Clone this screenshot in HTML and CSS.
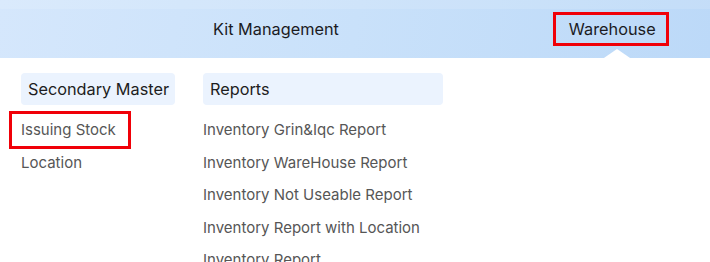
FILE: index.html
```html
<!DOCTYPE html>
<html>
<head>
<meta charset="utf-8">
<link rel="stylesheet" href="styles.css">
</head>
<body>
<header class="topbar">
  <nav class="nav">
    <span class="nav-item">Kit Management</span>
    <span class="nav-item nav-active">Warehouse</span>
  </nav>
</header>
<main class="menu">
  <section class="col col-master">
    <div class="col-head">Secondary Master</div>
    <ul class="col-list">
      <li class="col-item marked">Issuing Stock</li>
      <li class="col-item">Location</li>
    </ul>
  </section>
  <section class="col col-reports">
    <div class="col-head">Reports</div>
    <ul class="col-list">
      <li class="col-item">Inventory Grin&amp;Iqc Report</li>
      <li class="col-item">Inventory WareHouse Report</li>
      <li class="col-item">Inventory Not Useable Report</li>
      <li class="col-item">Inventory Report with Location</li>
      <li class="col-item">Inventory Report</li>
    </ul>
  </section>
</main>
</body>
</html>
```
FILE: styles.css
```css
* { box-sizing: border-box; }
html, body { margin: 0; padding: 0; background: #fff; }
body {
  font-family: Inter, "Noto Sans", sans-serif;
  width: 710px;
  height: 262px;
  overflow: hidden;
}
.topbar {
  height: 58px;
  background: linear-gradient(100deg, #d5e7fc 0%, #c9e1fa 50%, #bcd9f8 100%);
  position: relative;
}
.topbar::before {
  content: "";
  position: absolute;
  left: 0; right: 0; top: 0;
  height: 9px;
  background: rgba(255,255,255,0.12);
}
.nav {
  display: flex;
  align-items: center;
  height: 58px;
  padding-left: 213px;
}
.nav-item {
  font-size: 16.3px;
  color: #1b1b1f;
  line-height: 28px;
  white-space: nowrap;
}
.nav-active {
  position: relative;
  margin-left: 214px;
  border: 3px solid #f00008;
  padding: 0 10px 0 13px;
}
.nav-active::after {
  content: "";
  position: absolute;
  left: 45px;
  top: 34px;
  width: 0; height: 0;
  border-left: 16px solid transparent;
  border-right: 16px solid transparent;
  border-bottom: 11px solid #fff;
}
.menu {
  display: flex;
  gap: 28px;
  padding: 15px 0 0 21px;
}
.col-master { width: 154px; }
.col-reports { width: 240px; }
.col-head {
  height: 32px;
  line-height: 32px;
  padding: 0 0 0 7px;
  background: #ebf3fe;
  border-radius: 4px;
  font-size: 16.3px;
  color: #1d1d21;
  white-space: nowrap;
}
.col-list {
  list-style: none;
  margin: 9px 0 0;
  padding: 0;
}
.col-item {
  position: relative;
  height: 32.6px;
  line-height: 32.6px;
  font-size: 15px;
  color: #565656;
  white-space: nowrap;
}
.marked::after {
  content: "";
  position: absolute;
  left: -12px;
  right: 44px;
  top: -3px;
  bottom: -2px;
  border: 3px solid #f00008;
}
```
